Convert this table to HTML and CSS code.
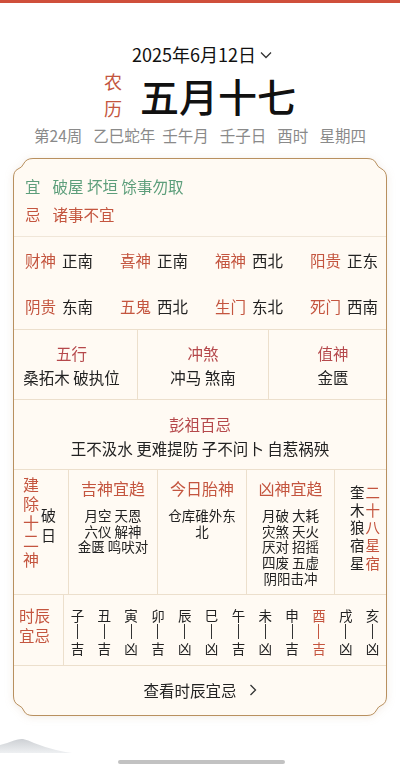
FILE: index.html
```html
<!DOCTYPE html>
<html lang="zh-CN">
<head>
<meta charset="utf-8">
<title>黄历</title>
<link rel="stylesheet" href="styles.css">
</head>
<body>
<div class="topbar"></div>
<header class="head">
  <div class="date">2025年6月12日<svg class="date-chev" width="12" height="8" viewBox="0 0 12 8"><path d="M1 1.5 L6 6.5 L11 1.5" fill="none" stroke="#333" stroke-width="1.3"/></svg></div>
  <div class="lunar">
    <div class="lunar-tag">农<br>历</div>
    <div class="lunar-day">五月十七</div>
  </div>
  <div class="ganzhi"><span>第24周</span><span>乙巳蛇年</span><span class="tight">壬午月</span><span>壬子日</span><span>酉时</span><span>星期四</span></div>
</header>

<main class="card">
  <section class="yiji">
    <div class="yj-row yi"><span class="yj-k">宜</span><span>破屋 坏垣 馀事勿取</span></div>
    <div class="yj-row ji"><span class="yj-k">忌</span><span>诸事不宜</span></div>
  </section>

  <section class="gods">
    <div class="god"><span class="gk">财神</span><span class="gv">正南</span></div>
    <div class="god"><span class="gk">喜神</span><span class="gv">正南</span></div>
    <div class="god"><span class="gk">福神</span><span class="gv">西北</span></div>
    <div class="god"><span class="gk">阳贵</span><span class="gv">正东</span></div>
    <div class="god"><span class="gk">阴贵</span><span class="gv">东南</span></div>
    <div class="god"><span class="gk">五鬼</span><span class="gv">西北</span></div>
    <div class="god"><span class="gk">生门</span><span class="gv">东北</span></div>
    <div class="god"><span class="gk">死门</span><span class="gv">西南</span></div>
  </section>

  <section class="tri">
    <div class="tri-cell c1"><div class="lbl">五行</div><div class="val">桑拓木 破执位</div></div>
    <div class="tri-cell c2"><div class="lbl">冲煞</div><div class="val">冲马 煞南</div></div>
    <div class="tri-cell c3"><div class="lbl">值神</div><div class="val">金匮</div></div>
  </section>

  <section class="pengzu">
    <div class="lbl">彭祖百忌</div>
    <div class="val">王不汲水 更难提防 子不问卜 自惹祸殃</div>
  </section>

  <section class="five">
    <div class="fcell jianchu">
      <div class="vtext red big">建除十二神</div>
      <div class="vtext dark mid">破日</div>
    </div>
    <div class="fcell list">
      <div class="flbl">吉神宜趋</div>
      <div class="fbody"><div>月空 天恩</div><div>六仪 解神</div><div>金匮 鸣吠对</div></div>
    </div>
    <div class="fcell list">
      <div class="flbl">今日胎神</div>
      <div class="fbody"><div>仓库碓外东</div><div>北</div></div>
    </div>
    <div class="fcell list">
      <div class="flbl">凶神宜趋</div>
      <div class="fbody"><div>月破 大耗</div><div>灾煞 天火</div><div>厌对 招摇</div><div>四废 五虚</div><div>阴阳击冲</div></div>
    </div>
    <div class="fcell xiu">
      <div class="vtext dark small">奎木狼宿星</div>
      <div class="vtext red small">二十八星宿</div>
    </div>
  </section>

  <section class="hours">
    <div class="hlbl">时辰<br>宜忌</div>
    <div class="hour"><span class="hz">子</span><i class="hl"></i><span class="hr">吉</span></div>
    <div class="hour"><span class="hz">丑</span><i class="hl"></i><span class="hr">吉</span></div>
    <div class="hour"><span class="hz">寅</span><i class="hl"></i><span class="hr">凶</span></div>
    <div class="hour"><span class="hz">卯</span><i class="hl"></i><span class="hr">吉</span></div>
    <div class="hour"><span class="hz">辰</span><i class="hl"></i><span class="hr">凶</span></div>
    <div class="hour"><span class="hz">巳</span><i class="hl"></i><span class="hr">凶</span></div>
    <div class="hour"><span class="hz">午</span><i class="hl"></i><span class="hr">吉</span></div>
    <div class="hour"><span class="hz">未</span><i class="hl"></i><span class="hr">凶</span></div>
    <div class="hour"><span class="hz">申</span><i class="hl"></i><span class="hr">吉</span></div>
    <div class="hour now"><span class="hz">酉</span><i class="hl"></i><span class="hr">吉</span></div>
    <div class="hour"><span class="hz">戌</span><i class="hl"></i><span class="hr">凶</span></div>
    <div class="hour"><span class="hz">亥</span><i class="hl"></i><span class="hr">凶</span></div>
  </section>

  <div class="more">查看时辰宜忌<svg width="8" height="12" viewBox="0 0 8 12"><path d="M1.5 1 L6.5 6 L1.5 11" fill="none" stroke="#333" stroke-width="1.3"/></svg></div>
</main>

<footer class="bottom">
  <svg class="mount" width="80" height="16" viewBox="0 0 80 16">
    <defs><linearGradient id="mg" x1="0" y1="0" x2="0" y2="1"><stop offset="0" stop-color="#cdd0d4"/><stop offset="1" stop-color="#eef0f2"/></linearGradient></defs>
    <path d="M0 16 L0 8 Q8 6 14 3.5 Q19 1.5 23 2 Q28 3 34 6 Q44 10 56 13 Q64 15 72 16 Z" fill="url(#mg)"/>
  </svg>
  <div class="homebar"></div>
</footer>
</body>
</html>
```

FILE: styles.css
```css
* { box-sizing: border-box; margin: 0; padding: 0; }
html, body { background: #fff; }
body {
  width: 400px;
  height: 772px;
  overflow: hidden;
  font-family: "Noto Sans CJK SC", "Noto Sans", sans-serif;
  color: #222;
}

.topbar { height: 3px; background: #cf4f3b; }

.head { padding-top: 39px; display: flex; flex-direction: column; align-items: center; }
.date {
  font-size: 18px; line-height: 24px; height: 24px; color: #111;
  display: flex; align-items: center; gap: 4px;
  padding-left: 4px;
}
.date-chev { margin-top: 2px; }
.lunar { display: flex; align-items: center; height: 58px; gap: 18px; }
.lunar-tag { width: 18px; font-size: 18px; line-height: 27px; color: #c4563f; text-align: center; }
.lunar-day { font-size: 39px; line-height: 58px; font-weight: 500; color: #111; }
.ganzhi {
  display: flex; gap: 11px; height: 20px; margin-top: 1px;
  font-size: 15.5px; line-height: 20px; color: #8a8a8a;
}
.ganzhi .tight { margin-left: -4px; }

.card {
  height: 558px;
  margin: 13px 13px 0;
  border: 1px solid transparent;
  background-image: url("data:image/svg+xml,%3Csvg xmlns='http://www.w3.org/2000/svg' width='374' height='558' viewBox='0 0 374 558'%3E%3Cpath d='M20 0.5 H354 Q361 0.5 363 5 Q364.5 9 368 10.5 Q373.5 13 373.5 20 V538 Q373.5 545 369 547 Q365 548.5 363.5 552 Q361 557.5 354 557.5 H20 Q13 557.5 11 553 Q9.5 549 6 547.5 Q0.5 545 0.5 538 V20 Q0.5 13 5 11 Q9 9.5 10.5 6 Q13 0.5 20 0.5 Z' fill='%23fffaf3' stroke='%23b8905f' stroke-width='1'/%3E%3C/svg%3E");
  background-origin: border-box;
  background-size: 100% 100%;
  background-repeat: no-repeat;
  filter: drop-shadow(0 1px 4px rgba(160, 120, 70, 0.14));
}

.yiji { padding: 13px 11px 8px; border-bottom: 1px solid #f0e6d8; }
.yj-row { display: flex; gap: 12px; font-size: 15.5px; line-height: 28px; }
.yi { color: #5d9e7b; }
.ji { color: #c4553f; }

.gods {
  display: grid;
  grid-template-columns: repeat(4, 95px);
  grid-auto-rows: 46px;
  padding-left: 11px;
  border-bottom: 1px solid #ecdfcc;
}
.god { display: flex; align-items: center; gap: 6px; font-size: 15.5px; }
.gk { color: #c4553f; }
.gv { color: #222; }

.lbl { font-size: 15.5px; line-height: 24px; color: #b5484b; }
.val { font-size: 15.5px; line-height: 24px; color: #222; }

.tri {
  display: grid;
  grid-template-columns: 124px 131px 1fr;
  height: 70px;
  border-bottom: 1px solid #ecdfcc;
}
.tri-cell { padding-top: 11px; text-align: center; border-right: 1px solid #ecdfcc; }
.tri-cell.c1 { padding-right: 8px; }
.tri-cell.c3 { padding-left: 11px; border-right: none; }

.pengzu { height: 70px; padding-top: 12px; text-align: center; border-bottom: 1px solid #ecdfcc; }

.five {
  display: grid;
  grid-template-columns: 55px 89px 89px 88px 1fr;
  height: 125px;
  border-bottom: 1px solid #ecdfcc;
}
.fcell { border-right: 1px solid #ecdfcc; }
.fcell:last-child { border-right: none; }

.vtext { width: 1em; word-break: break-all; text-align: center; }
.vtext.red { color: #c4553f; }
.vtext.dark { color: #222; }
.vtext.big { font-size: 16px; line-height: 18.75px; }
.vtext.mid { font-size: 15px; line-height: 19.5px; }
.vtext.small { font-size: 14.5px; line-height: 17.7px; }

.jianchu { display: flex; align-items: flex-start; gap: 2px; padding: 5px 0 0 9px; }
.jianchu .mid { margin-top: 30px; }

.list { padding-top: 7px; text-align: center; }
.flbl { font-size: 16px; line-height: 22px; color: #c4553f; }
.fbody { margin-top: 9px; font-size: 13.5px; line-height: 15.7px; color: #222; white-space: nowrap; }
.fbody > div { height: 15.7px; }

.xiu { display: flex; gap: 1px; padding: 13px 0 0 15px; }

.hours {
  display: grid;
  grid-template-columns: 50px repeat(12, 1fr);
  height: 71px;
  border-bottom: 1px solid #ecdfcc;
}
.hlbl {
  padding: 10px 0 0 5px;
  font-size: 15.5px; line-height: 20px; color: #c4553f;
  border-right: 1px solid #ecdfcc;
}
.hour { display: flex; flex-direction: column; align-items: center; padding-top: 12px; }
.hz, .hr { font-size: 13.5px; line-height: 16px; color: #222; }
.hl { display: block; width: 1px; height: 15px; margin: 1px 0; background: #333; }
.hour.now .hz, .hour.now .hr { color: #c4553f; }
.hour.now .hl { background: #c4553f; }

.more {
  height: 48px;
  display: flex; align-items: center; justify-content: center; gap: 12px;
  font-size: 15.5px; color: #222;
}

.bottom { padding-top: 21px; }
.mount { display: block; }
.homebar {
  width: 167px; height: 4px; margin: 7px 0 0 118px;
  border-radius: 3px; background: #c2c2c2;
}
```
